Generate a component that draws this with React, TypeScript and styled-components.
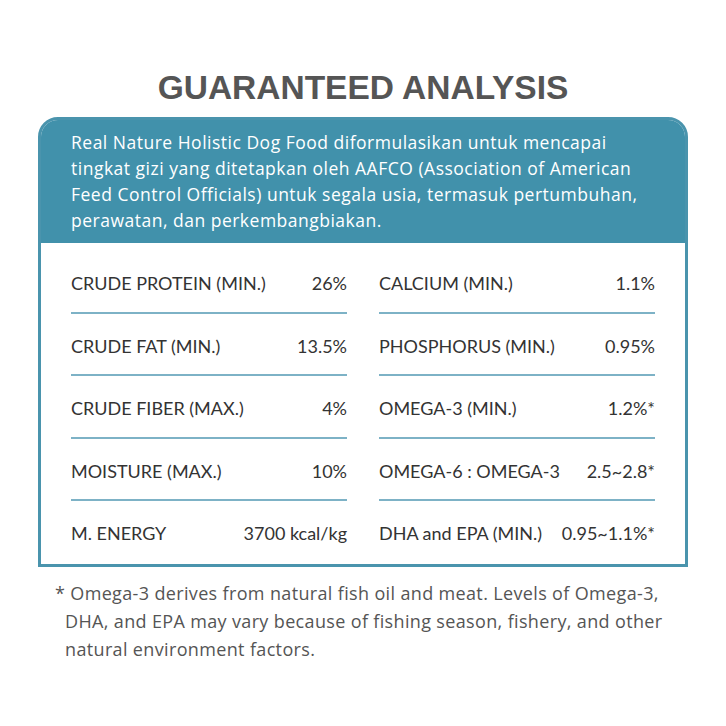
import React from "react";
import styled, { createGlobalStyle } from "styled-components";

const Global = createGlobalStyle`
  html, body { margin: 0; padding: 0; background: #ffffff; }
  body { font-family: "Lato", "Noto Sans", sans-serif; }
`;

const Page = styled.div`
  width: 726px;
  height: 726px;
  background: #ffffff;
  display: flex;
  flex-direction: column;
  align-items: center;
  box-sizing: border-box;
  padding-top: 64px;
`;

const Title = styled.h1`
  margin: 0;
  font-family: "Liberation Sans", Arial, sans-serif;
  font-weight: 700;
  font-size: 33.5px;
  line-height: 48px;
  color: #555555;
  white-space: nowrap;
`;

const Card = styled.section`
  margin-top: 5px;
  width: 650px;
  box-sizing: border-box;
  border: 3px solid #4a94ad;
  border-radius: 20px 20px 0 0;
  overflow: hidden;
`;

const Header = styled.div`
  background: #4191ab;
  color: #ffffff;
  font-family: "Open Sans", "Lato", sans-serif;
  font-size: 17.5px;
  letter-spacing: 0.5px;
  line-height: 26px;
  padding: 9px 30px 10px 30px;
`;

const Body = styled.div`
  display: grid;
  grid-template-columns: 276px 276px;
  column-gap: 32px;
  padding: 8px 30px 2px 30px;
  background: #ffffff;
`;

const Column = styled.div`
  display: flex;
  flex-direction: column;
`;

const Row = styled.div<{ $last?: boolean }>`
  display: flex;
  justify-content: space-between;
  align-items: center;
  padding: 21px 0 ${(p) => (p.$last ? "18px" : "17.5px")} 0;
  border-bottom: ${(p) => (p.$last ? "none" : "2px solid #7db2c6")};
  font-size: 18px;
  line-height: 22px;
  color: #333333;
`;

const Label = styled.span``;
const Value = styled.span``;

const Note = styled.p`
  margin: 12px 0 0 55px;
  width: 622px;
  font-family: "Open Sans", "Lato", sans-serif;
  font-size: 18px;
  letter-spacing: 0.35px;
  line-height: 28px;
  color: #555555;
  padding-left: 10px;
  text-indent: -10px;
  box-sizing: border-box;
  align-self: flex-start;
`;

const left: [string, string][] = [
  ["CRUDE PROTEIN (MIN.)", "26%"],
  ["CRUDE FAT (MIN.)", "13.5%"],
  ["CRUDE FIBER (MAX.)", "4%"],
  ["MOISTURE (MAX.)", "10%"],
  ["M. ENERGY", "3700 kcal/kg"],
];

const right: [string, string][] = [
  ["CALCIUM (MIN.)", "1.1%"],
  ["PHOSPHORUS (MIN.)", "0.95%"],
  ["OMEGA-3 (MIN.)", "1.2%*"],
  ["OMEGA-6 : OMEGA-3", "2.5~2.8*"],
  ["DHA and EPA (MIN.)", "0.95~1.1%*"],
];

function renderCol(items: [string, string][]) {
  return items.map(([l, v], i) => (
    <Row key={l} $last={i === items.length - 1}>
      <Label>{l}</Label>
      <Value>{v}</Value>
    </Row>
  ));
}

export default function App() {
  return (
    <Page>
      <Global />
      <Title>GUARANTEED ANALYSIS</Title>
      <Card>
        <Header>
          Real Nature Holistic Dog Food diformulasikan untuk mencapai tingkat gizi yang
          ditetapkan oleh AAFCO (Association of American Feed Control Officials) untuk
          segala usia, termasuk pertumbuhan, perawatan, dan perkembangbiakan.
        </Header>
        <Body>
          <Column>{renderCol(left)}</Column>
          <Column>{renderCol(right)}</Column>
        </Body>
      </Card>
      <Note>
        * Omega-3 derives from natural fish oil and meat. Levels of Omega-3, DHA, and EPA
        may vary because of fishing season, fishery, and other natural environment factors.
      </Note>
    </Page>
  );
}
